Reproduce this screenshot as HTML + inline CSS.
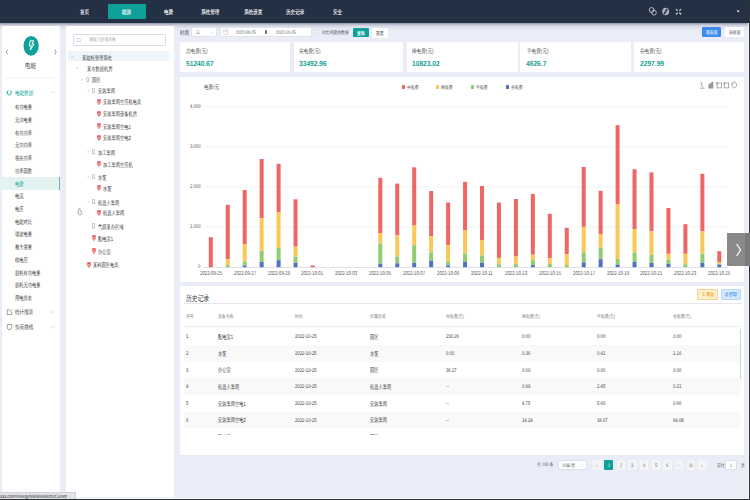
<!DOCTYPE html>
<html><head><meta charset="utf-8">
<style>
*{margin:0;padding:0;box-sizing:border-box}
html,body{width:750px;height:500px;overflow:hidden;background:#eaedf8;font-family:"Liberation Sans",sans-serif;color:#333}
.a{position:absolute}
.t{position:absolute;white-space:nowrap;line-height:1;transform:scaleX(0.77);transform-origin:0 0;text-rendering:geometricPrecision}
</style></head><body>
<div class="a" style="left:0.00px;top:0.00px;width:750.00px;height:22.60px;background:#243044;"></div>
<div class="a" style="left:0.00px;top:22.60px;width:750.00px;height:8.00px;background:linear-gradient(#8f95a6 0%,#c9ccd9 25%,#e3e6f2 60%,#eaedf8 100%);"></div>
<div class="a" style="left:108.00px;top:4.00px;width:37.50px;height:15.20px;background:#10a09a;border-radius:1px"></div>
<div class="t" style="left:79.55px;top:9.95px;font-size:6px;color:#fff;font-weight:normal;text-shadow:0 0 0.5px rgba(255,255,255,.7);">首页</div>
<div class="t" style="left:121.65px;top:9.95px;font-size:6px;color:#fff;font-weight:normal;text-shadow:0 0 0.5px rgba(255,255,255,.7);">能源</div>
<div class="t" style="left:163.75px;top:9.95px;font-size:6px;color:#fff;font-weight:normal;text-shadow:0 0 0.5px rgba(255,255,255,.7);">电费</div>
<div class="t" style="left:201.40px;top:9.95px;font-size:6px;color:#fff;font-weight:normal;text-shadow:0 0 0.5px rgba(255,255,255,.7);">系统管理</div>
<div class="t" style="left:243.90px;top:9.95px;font-size:6px;color:#fff;font-weight:normal;text-shadow:0 0 0.5px rgba(255,255,255,.7);">系统设置</div>
<div class="t" style="left:285.60px;top:9.95px;font-size:6px;color:#fff;font-weight:normal;text-shadow:0 0 0.5px rgba(255,255,255,.7);">历史记录</div>
<div class="t" style="left:333.35px;top:9.95px;font-size:6px;color:#fff;font-weight:normal;text-shadow:0 0 0.5px rgba(255,255,255,.7);">安全</div>
<svg class="a" style="left:648px;top:5px" width="100" height="13" viewBox="0 0 100 13">
 <g fill="none" stroke="#b3b8c1" stroke-width="1.0">
  <ellipse cx="3.6" cy="5.0" rx="2.3" ry="2.5"/><ellipse cx="6.0" cy="7.6" rx="2.3" ry="2.5"/>
 </g>
 <ellipse cx="17.7" cy="6.5" rx="3.5" ry="3.8" fill="#aab0ba"/>
 <line x1="16.1" y1="9.2" x2="19.3" y2="3.8" stroke="#243044" stroke-width="1.5"/>
 <g stroke="#cfd3da" stroke-width="1.3" stroke-linecap="round">
  <path d="M28.3 4.4 l1 1 M32.7 4.4 l-1 1 M28.3 9 l1 -1 M32.7 9 l-1 -1"/>
 </g>
 <path d="M88.6 5.6 h3 l-1.5 1.9 z" fill="#fff"/>
</svg>
<div class="a" style="left:2.00px;top:26.40px;width:58.30px;height:470.20px;background:#fff;"></div>
<svg class="a" style="left:0;top:27px" width="62" height="60" viewBox="0 0 62 60">
 <ellipse cx="31.1" cy="18.8" rx="7.6" ry="9.9" fill="#10a09a"/>
 <path d="M30.2 13.8 h3.4 l-1.6 3.2 h2 l-3.6 5.6 l0.8 -3.8 h-1.9 z" fill="none" stroke="#e8fbf8" stroke-width="1.05" stroke-linejoin="round"/>
 <path d="M7.6 22.6 l-1.3 2.4 l1.3 2.4" fill="none" stroke="#8f9298" stroke-width="0.9"/>
 <path d="M54.9 22.6 l1.3 2.4 l-1.3 2.4" fill="none" stroke="#8f9298" stroke-width="0.9"/>
 <line x1="4" y1="50.9" x2="59" y2="50.9" stroke="#eceef2" stroke-width="0.8"/>
</svg>
<div class="t" style="left:25.00px;top:63.01px;font-size:7px;color:#3a3a3a;font-weight:normal;">电能</div>
<svg class="a" style="left:6px;top:88px" width="8" height="9" viewBox="0 0 8 9"><path d="M4.2 2.6 A2.1 2.3 0 1 1 2.4 2.5" fill="none" stroke="#10a09a" stroke-width="0.95"/></svg>
<div class="t" style="left:14.70px;top:90.82px;font-size:6px;color:#10a09a;font-weight:normal;">电能数据</div>
<svg class="a" style="left:50px;top:90px" width="6" height="5" viewBox="0 0 6 5"><path d="M1 3.2 l1.8 -1.6 l1.8 1.6" fill="none" stroke="#c0c4cc" stroke-width="0.6"/></svg>
<div class="t" style="left:14.70px;top:105.28px;font-size:6px;color:#383838;font-weight:normal;transform:scaleX(0.71);">有功电量</div>
<div class="t" style="left:14.70px;top:118.00px;font-size:6px;color:#383838;font-weight:normal;transform:scaleX(0.71);">无功电量</div>
<div class="t" style="left:14.70px;top:130.72px;font-size:6px;color:#383838;font-weight:normal;transform:scaleX(0.71);">有功功率</div>
<div class="t" style="left:14.70px;top:143.44px;font-size:6px;color:#383838;font-weight:normal;transform:scaleX(0.71);">无功功率</div>
<div class="t" style="left:14.70px;top:156.16px;font-size:6px;color:#383838;font-weight:normal;transform:scaleX(0.71);">视在功率</div>
<div class="t" style="left:14.70px;top:168.88px;font-size:6px;color:#383838;font-weight:normal;transform:scaleX(0.71);">功率因数</div>
<div class="a" style="left:0.00px;top:176.72px;width:60.30px;height:12.80px;background:#e2f3f2;"></div>
<div class="a" style="left:59.30px;top:176.72px;width:1.10px;height:12.80px;background:#6fb0aa;"></div>
<div class="t" style="left:14.70px;top:181.60px;font-size:6px;color:#10a09a;font-weight:normal;transform:scaleX(0.71);">电费</div>
<div class="t" style="left:14.70px;top:194.32px;font-size:6px;color:#383838;font-weight:normal;transform:scaleX(0.71);">电流</div>
<div class="t" style="left:14.70px;top:207.04px;font-size:6px;color:#383838;font-weight:normal;transform:scaleX(0.71);">电压</div>
<div class="t" style="left:14.70px;top:219.76px;font-size:6px;color:#383838;font-weight:normal;transform:scaleX(0.71);">电能对比</div>
<div class="t" style="left:14.70px;top:232.48px;font-size:6px;color:#383838;font-weight:normal;transform:scaleX(0.71);">谐波电量</div>
<div class="t" style="left:14.70px;top:245.20px;font-size:6px;color:#383838;font-weight:normal;transform:scaleX(0.71);">最大需量</div>
<div class="t" style="left:14.70px;top:257.92px;font-size:6px;color:#383838;font-weight:normal;transform:scaleX(0.71);">线电压</div>
<div class="t" style="left:14.70px;top:270.64px;font-size:6px;color:#383838;font-weight:normal;transform:scaleX(0.71);">损耗有功电量</div>
<div class="t" style="left:14.70px;top:283.36px;font-size:6px;color:#383838;font-weight:normal;transform:scaleX(0.71);">损耗无功电量</div>
<div class="t" style="left:14.70px;top:296.08px;font-size:6px;color:#383838;font-weight:normal;transform:scaleX(0.71);">用电排名</div>
<svg class="a" style="left:6px;top:308px" width="8" height="24" viewBox="0 0 8 24">
 <path d="M1.2 1.8 h2.6 M1.2 1.8 v4.8 h4.6 v-2.6" fill="none" stroke="#777" stroke-width="0.7"/>
 <path d="M3.4 4.2 l2.8 -2.8" stroke="#777" stroke-width="0.7"/>
 <path d="M1.3 16.6 h4.4 v2.8 a2.2 2.2 0 0 1 -4.4 0 z" fill="none" stroke="#777" stroke-width="0.7"/>
</svg>
<div class="t" style="left:14.90px;top:310.15px;font-size:6px;color:#444;font-weight:normal;">统计报表</div>
<div class="t" style="left:14.90px;top:325.05px;font-size:6px;color:#444;font-weight:normal;">负荷曲线</div>
<svg class="a" style="left:50px;top:309px" width="6" height="20" viewBox="0 0 6 20"><path d="M1 2.2 l1.8 1.4 l1.8 -1.4 M1 17 l1.8 1.4 l1.8 -1.4" fill="none" stroke="#c0c4cc" stroke-width="0.6"/></svg>
<div class="a" style="left:65.80px;top:26.40px;width:108.60px;height:470.20px;background:#fff;"></div>
<div class="a" style="left:73.40px;top:34.30px;width:92.30px;height:11.40px;background:#fff;border:0.6px solid #dcdee3;border-radius:1.2px"></div>
<svg class="a" style="left:76px;top:36.5px" width="6" height="7" viewBox="0 0 6 7"><circle cx="2.8" cy="3" r="1.7" fill="none" stroke="#b8bcc4" stroke-width="0.6"/><line x1="4" y1="4.3" x2="5" y2="5.3" stroke="#b8bcc4" stroke-width="0.6"/></svg>
<div class="t" style="left:88.80px;top:38.25px;font-size:5px;color:#9a9da3;font-weight:normal;">请输入区域名称</div>
<div class="a" style="left:68.00px;top:51.00px;width:101.00px;height:10.00px;background:#ecf4fc;"></div>
<svg class="a" style="left:71.30px;top:55.75px" width="2.4" height="2" viewBox="0 0 24 20"><path d="M2 3 h20 l-10 14 z" fill="#c0c4cc"/></svg>
<div class="t" style="left:82.00px;top:55.63px;font-size:6px;color:#383838;font-weight:normal;transform:scaleX(0.71);">某能耗管理系统</div>
<svg class="a" style="left:76.30px;top:67.30px" width="2.4" height="2" viewBox="0 0 24 20"><path d="M2 3 h20 l-10 14 z" fill="#c0c4cc"/></svg>
<div class="t" style="left:87.00px;top:67.18px;font-size:6px;color:#383838;font-weight:normal;transform:scaleX(0.71);">某市数据机房</div>
<svg class="a" style="left:81.30px;top:78.50px" width="2.4" height="2" viewBox="0 0 24 20"><path d="M2 3 h20 l-10 14 z" fill="#c0c4cc"/></svg>
<svg class="a" style="left:86.40px;top:76.80px" width="3" height="5.4" viewBox="0 0 30 54"><rect x="4" y="3" width="22" height="48" rx="5" fill="none" stroke="#8d9096" stroke-width="5"/><rect x="11" y="40" width="8" height="5" fill="#8d9096"/></svg>
<div class="t" style="left:92.00px;top:78.38px;font-size:6px;color:#383838;font-weight:normal;transform:scaleX(0.71);">园区</div>
<svg class="a" style="left:86.80px;top:89.50px" width="2.4" height="2" viewBox="0 0 24 20"><path d="M2 3 h20 l-10 14 z" fill="#c0c4cc"/></svg>
<svg class="a" style="left:91.60px;top:87.80px" width="3" height="5.4" viewBox="0 0 30 54"><rect x="4" y="3" width="22" height="48" rx="5" fill="none" stroke="#8d9096" stroke-width="5"/><rect x="11" y="40" width="8" height="5" fill="#8d9096"/></svg>
<div class="t" style="left:97.50px;top:89.38px;font-size:6px;color:#383838;font-weight:normal;transform:scaleX(0.71);">安装车间</div>
<svg class="a" style="left:96.60px;top:98.50px" width="4" height="6" viewBox="0 0 40 60"><rect x="3" y="3" width="34" height="36" rx="4" fill="#f7a0a0" stroke="#e55050" stroke-width="6"/><rect x="10" y="10" width="20" height="10" fill="#e55050"/><path d="M12 39 h16 v18 h-16 z" fill="#f08080"/></svg>
<div class="t" style="left:102.90px;top:100.38px;font-size:6px;color:#383838;font-weight:normal;transform:scaleX(0.71);">安装车间空压机电表</div>
<svg class="a" style="left:96.60px;top:110.60px" width="4" height="6" viewBox="0 0 40 60"><rect x="3" y="3" width="34" height="36" rx="4" fill="#f7a0a0" stroke="#e55050" stroke-width="6"/><rect x="10" y="10" width="20" height="10" fill="#e55050"/><path d="M12 39 h16 v18 h-16 z" fill="#f08080"/></svg>
<div class="t" style="left:102.90px;top:112.48px;font-size:6px;color:#383838;font-weight:normal;transform:scaleX(0.71);">安装车间设备机房</div>
<svg class="a" style="left:96.60px;top:122.90px" width="4" height="6" viewBox="0 0 40 60"><rect x="3" y="3" width="34" height="36" rx="4" fill="#f7a0a0" stroke="#e55050" stroke-width="6"/><rect x="10" y="10" width="20" height="10" fill="#e55050"/><path d="M12 39 h16 v18 h-16 z" fill="#f08080"/></svg>
<div class="t" style="left:102.90px;top:124.78px;font-size:6px;color:#383838;font-weight:normal;transform:scaleX(0.71);">安装车间空电1</div>
<svg class="a" style="left:96.60px;top:134.60px" width="4" height="6" viewBox="0 0 40 60"><rect x="3" y="3" width="34" height="36" rx="4" fill="#f7a0a0" stroke="#e55050" stroke-width="6"/><rect x="10" y="10" width="20" height="10" fill="#e55050"/><path d="M12 39 h16 v18 h-16 z" fill="#f08080"/></svg>
<div class="t" style="left:102.90px;top:136.48px;font-size:6px;color:#383838;font-weight:normal;transform:scaleX(0.71);">安装车间空电2</div>
<svg class="a" style="left:86.80px;top:151.00px" width="2.4" height="2" viewBox="0 0 24 20"><path d="M2 3 h20 l-10 14 z" fill="#c0c4cc"/></svg>
<svg class="a" style="left:91.60px;top:149.30px" width="3" height="5.4" viewBox="0 0 30 54"><rect x="4" y="3" width="22" height="48" rx="5" fill="none" stroke="#8d9096" stroke-width="5"/><rect x="11" y="40" width="8" height="5" fill="#8d9096"/></svg>
<div class="t" style="left:97.50px;top:150.88px;font-size:6px;color:#383838;font-weight:normal;transform:scaleX(0.71);">加工车间</div>
<svg class="a" style="left:96.60px;top:160.70px" width="4" height="6" viewBox="0 0 40 60"><rect x="3" y="3" width="34" height="36" rx="4" fill="#f7a0a0" stroke="#e55050" stroke-width="6"/><rect x="10" y="10" width="20" height="10" fill="#e55050"/><path d="M12 39 h16 v18 h-16 z" fill="#f08080"/></svg>
<div class="t" style="left:102.90px;top:162.58px;font-size:6px;color:#383838;font-weight:normal;transform:scaleX(0.71);">加工车间空压机</div>
<svg class="a" style="left:86.80px;top:175.80px" width="2.4" height="2" viewBox="0 0 24 20"><path d="M2 3 h20 l-10 14 z" fill="#c0c4cc"/></svg>
<svg class="a" style="left:91.60px;top:174.10px" width="3" height="5.4" viewBox="0 0 30 54"><rect x="4" y="3" width="22" height="48" rx="5" fill="none" stroke="#8d9096" stroke-width="5"/><rect x="11" y="40" width="8" height="5" fill="#8d9096"/></svg>
<div class="t" style="left:97.50px;top:175.68px;font-size:6px;color:#383838;font-weight:normal;transform:scaleX(0.71);">水泵</div>
<svg class="a" style="left:96.60px;top:185.00px" width="4" height="6" viewBox="0 0 40 60"><rect x="3" y="3" width="34" height="36" rx="4" fill="#f7a0a0" stroke="#e55050" stroke-width="6"/><rect x="10" y="10" width="20" height="10" fill="#e55050"/><path d="M12 39 h16 v18 h-16 z" fill="#f08080"/></svg>
<div class="t" style="left:102.90px;top:186.88px;font-size:6px;color:#383838;font-weight:normal;transform:scaleX(0.71);">水泵</div>
<svg class="a" style="left:86.80px;top:200.70px" width="2.4" height="2" viewBox="0 0 24 20"><path d="M2 3 h20 l-10 14 z" fill="#c0c4cc"/></svg>
<svg class="a" style="left:91.60px;top:199.00px" width="3" height="5.4" viewBox="0 0 30 54"><rect x="4" y="3" width="22" height="48" rx="5" fill="none" stroke="#8d9096" stroke-width="5"/><rect x="11" y="40" width="8" height="5" fill="#8d9096"/></svg>
<div class="t" style="left:97.50px;top:200.58px;font-size:6px;color:#383838;font-weight:normal;transform:scaleX(0.71);">机器人车间</div>
<svg class="a" style="left:96.60px;top:209.60px" width="4" height="6" viewBox="0 0 40 60"><rect x="3" y="3" width="34" height="36" rx="4" fill="#f7a0a0" stroke="#e55050" stroke-width="6"/><rect x="10" y="10" width="20" height="10" fill="#e55050"/><path d="M12 39 h16 v18 h-16 z" fill="#f08080"/></svg>
<div class="t" style="left:102.90px;top:211.48px;font-size:6px;color:#383838;font-weight:normal;transform:scaleX(0.71);">机器人车间</div>
<svg class="a" style="left:91.60px;top:223.20px" width="3" height="5.4" viewBox="0 0 30 54"><rect x="4" y="3" width="22" height="48" rx="5" fill="none" stroke="#8d9096" stroke-width="5"/><rect x="11" y="40" width="8" height="5" fill="#8d9096"/></svg>
<div class="t" style="left:97.50px;top:224.78px;font-size:6px;color:#383838;font-weight:normal;transform:scaleX(0.71);">气膜某办区域</div>
<svg class="a" style="left:91.60px;top:235.20px" width="4" height="6" viewBox="0 0 40 60"><rect x="3" y="3" width="34" height="36" rx="4" fill="#f7a0a0" stroke="#e55050" stroke-width="6"/><rect x="10" y="10" width="20" height="10" fill="#e55050"/><path d="M12 39 h16 v18 h-16 z" fill="#f08080"/></svg>
<div class="t" style="left:97.80px;top:237.08px;font-size:6px;color:#383838;font-weight:normal;transform:scaleX(0.71);">配电室1</div>
<svg class="a" style="left:91.60px;top:248.00px" width="4" height="6" viewBox="0 0 40 60"><rect x="3" y="3" width="34" height="36" rx="4" fill="#f7a0a0" stroke="#e55050" stroke-width="6"/><rect x="10" y="10" width="20" height="10" fill="#e55050"/><path d="M12 39 h16 v18 h-16 z" fill="#f08080"/></svg>
<div class="t" style="left:97.80px;top:249.88px;font-size:6px;color:#383838;font-weight:normal;transform:scaleX(0.71);">办公室</div>
<svg class="a" style="left:86.60px;top:261.60px" width="4" height="6" viewBox="0 0 40 60"><rect x="3" y="3" width="34" height="36" rx="4" fill="#f7a0a0" stroke="#e55050" stroke-width="6"/><rect x="10" y="10" width="20" height="10" fill="#e55050"/><path d="M12 39 h16 v18 h-16 z" fill="#f08080"/></svg>
<div class="t" style="left:92.80px;top:263.48px;font-size:6px;color:#383838;font-weight:normal;transform:scaleX(0.71);">某科园区电表</div>
<svg class="a" style="left:76.5px;top:207.8px" width="5" height="8" viewBox="0 0 10 16"><path d="M3 1.5 v7 l-1.3 -1 l-0.9 1 l3.2 5 h4.5 l0.8 -3 v-3.2 l-1 -0.4 v-0.4 l-1 -0.4 v-0.3 l-1 -0.4 v-3.9 z" fill="#f4f4f4" stroke="#666" stroke-width="0.9"/></svg>
<div class="t" style="left:180.00px;top:31.01px;font-size:6px;color:#444;font-weight:normal;">时间</div>
<div class="a" style="left:191.20px;top:27.20px;width:26.00px;height:10.00px;background:#fff;border:0.5px solid #e0e3ea;border-radius:1px"></div>
<div class="t" style="left:195.60px;top:30.92px;font-size:5px;color:#888;font-weight:normal;">日</div>
<svg class="a" style="left:210px;top:30.5px" width="5" height="4" viewBox="0 0 5 4"><path d="M1 1.3 l1.5 1.4 l1.5 -1.4" fill="none" stroke="#c0c4cc" stroke-width="0.5"/></svg>
<div class="a" style="left:220.40px;top:27.20px;width:91.20px;height:10.00px;background:#fff;border:0.5px solid #e0e3ea;border-radius:1px"></div>
<svg class="a" style="left:223px;top:29.2px" width="6" height="6" viewBox="0 0 6 6"><rect x="0.8" y="0.8" width="4" height="4.4" fill="none" stroke="#c0c4cc" stroke-width="0.6"/><line x1="0.8" y1="2.2" x2="4.8" y2="2.2" stroke="#c0c4cc" stroke-width="0.6"/></svg>
<div class="t" style="left:236.30px;top:30.95px;font-size:5.0px;color:#555;font-weight:normal;">2022-09-25</div>
<div class="a" style="left:264.60px;top:29.80px;width:1.80px;height:4.60px;background:transparent;border:0.5px solid #777;border-radius:0.4px"></div>
<div class="t" style="left:276.00px;top:30.95px;font-size:5.0px;color:#555;font-weight:normal;">2022-10-25</div>
<div class="a" style="left:314.30px;top:30.30px;width:3.80px;height:3.80px;background:#fff;border:0.5px solid #dcdfe6;border-radius:0.5px"></div>
<div class="t" style="left:321.50px;top:31.02px;font-size:5px;color:#555;font-weight:normal;">对比同期的数据</div>
<div class="a" style="left:353.00px;top:28.20px;width:15.80px;height:9.20px;background:#10a09a;border-radius:1px"></div>
<div class="t" style="left:357.05px;top:31.55px;font-size:5px;color:#fff;font-weight:bold;">查询</div>
<div class="a" style="left:372.00px;top:28.00px;width:15.70px;height:9.70px;background:#fff;border-radius:1px"></div>
<div class="t" style="left:376.15px;top:31.55px;font-size:5px;color:#555;font-weight:normal;">重置</div>
<div class="a" style="left:702.30px;top:27.30px;width:19.10px;height:9.60px;background:#3c8cf0;border-radius:1px"></div>
<div class="t" style="left:706.12px;top:30.85px;font-size:5px;color:#fff;font-weight:normal;">图表版</div>
<div class="a" style="left:725.00px;top:27.30px;width:19.10px;height:9.60px;background:#fff;border-radius:1px"></div>
<div class="t" style="left:728.83px;top:30.85px;font-size:5px;color:#555;font-weight:normal;">表格版</div>
<div class="a" style="left:179.70px;top:42.00px;width:110.50px;height:30.00px;background:#fff;"></div>
<div class="t" style="left:186.00px;top:49.05px;font-size:6px;color:#5a5a5a;font-weight:normal;">总电费(元)</div>
<div class="t" style="left:185.60px;top:59.65px;font-size:7.4px;color:#1a9f97;font-weight:bold;transform:scaleX(0.9);">51240.67</div>
<div class="a" style="left:293.70px;top:42.00px;width:109.80px;height:30.00px;background:#fff;"></div>
<div class="t" style="left:299.00px;top:49.05px;font-size:6px;color:#5a5a5a;font-weight:normal;">尖电费(元)</div>
<div class="t" style="left:298.60px;top:59.65px;font-size:7.4px;color:#1a9f97;font-weight:bold;transform:scaleX(0.9);">33492.96</div>
<div class="a" style="left:407.00px;top:42.00px;width:110.70px;height:30.00px;background:#fff;"></div>
<div class="t" style="left:412.30px;top:49.05px;font-size:6px;color:#5a5a5a;font-weight:normal;">峰电费(元)</div>
<div class="t" style="left:411.90px;top:59.65px;font-size:7.4px;color:#1a9f97;font-weight:bold;transform:scaleX(0.9);">10823.02</div>
<div class="a" style="left:520.30px;top:42.00px;width:111.00px;height:30.00px;background:#fff;"></div>
<div class="t" style="left:526.50px;top:49.05px;font-size:6px;color:#5a5a5a;font-weight:normal;">平电费(元)</div>
<div class="t" style="left:526.10px;top:59.65px;font-size:7.4px;color:#1a9f97;font-weight:bold;transform:scaleX(0.9);">4626.7</div>
<div class="a" style="left:634.00px;top:42.00px;width:110.30px;height:30.00px;background:#fff;"></div>
<div class="t" style="left:640.00px;top:49.05px;font-size:6px;color:#5a5a5a;font-weight:normal;">谷电费(元)</div>
<div class="t" style="left:639.60px;top:59.65px;font-size:7.4px;color:#1a9f97;font-weight:bold;transform:scaleX(0.9);">2297.99</div>
<div class="a" style="left:179.70px;top:76.60px;width:564.60px;height:205.80px;background:#fff;"></div>
<svg class="a" style="left:0;top:0" width="750" height="500" viewBox="0 0 750 500">
<g stroke="#e8eaf0" stroke-width="0.6">
<line x1="203.5" y1="106.7" x2="728" y2="106.7"/>
<line x1="203.5" y1="146.8" x2="728" y2="146.8"/>
<line x1="203.5" y1="186.9" x2="728" y2="186.9"/>
<line x1="203.5" y1="227.0" x2="728" y2="227.0"/>
</g>
<line x1="203.5" y1="267.4" x2="728" y2="267.4" stroke="#cfd2d8" stroke-width="0.7"/>
<rect x="208.80" y="237.20" width="4.0" height="30.00" fill="#ee6666"/>
<rect x="225.75" y="204.80" width="4.0" height="54.40" fill="#ee6666"/>
<rect x="225.75" y="259.20" width="4.0" height="5.90" fill="#fac858"/>
<rect x="225.75" y="265.10" width="4.0" height="2.10" fill="#91cc75"/>
<rect x="242.70" y="190.00" width="4.0" height="54.40" fill="#ee6666"/>
<rect x="242.70" y="244.40" width="4.0" height="17.10" fill="#fac858"/>
<rect x="242.70" y="261.50" width="4.0" height="4.10" fill="#91cc75"/>
<rect x="242.70" y="265.60" width="4.0" height="1.60" fill="#5470c6"/>
<rect x="259.65" y="159.00" width="4.0" height="59.30" fill="#ee6666"/>
<rect x="259.65" y="218.30" width="4.0" height="32.40" fill="#fac858"/>
<rect x="259.65" y="250.70" width="4.0" height="11.30" fill="#91cc75"/>
<rect x="259.65" y="262.00" width="4.0" height="5.20" fill="#5470c6"/>
<rect x="276.60" y="163.80" width="4.0" height="48.60" fill="#ee6666"/>
<rect x="276.60" y="212.40" width="4.0" height="35.60" fill="#fac858"/>
<rect x="276.60" y="248.00" width="4.0" height="12.20" fill="#91cc75"/>
<rect x="276.60" y="260.20" width="4.0" height="7.00" fill="#5470c6"/>
<rect x="293.55" y="199.30" width="4.0" height="47.40" fill="#ee6666"/>
<rect x="293.55" y="246.70" width="4.0" height="9.90" fill="#fac858"/>
<rect x="293.55" y="256.60" width="4.0" height="6.20" fill="#91cc75"/>
<rect x="293.55" y="262.80" width="4.0" height="4.40" fill="#5470c6"/>
<rect x="310.50" y="265.50" width="4.0" height="1.70" fill="#ee6666"/>
<rect x="378.30" y="177.80" width="4.0" height="55.40" fill="#ee6666"/>
<rect x="378.30" y="233.20" width="4.0" height="10.30" fill="#fac858"/>
<rect x="378.30" y="243.50" width="4.0" height="20.20" fill="#91cc75"/>
<rect x="378.30" y="263.70" width="4.0" height="3.50" fill="#5470c6"/>
<rect x="395.25" y="183.60" width="4.0" height="51.80" fill="#ee6666"/>
<rect x="395.25" y="235.40" width="4.0" height="21.10" fill="#fac858"/>
<rect x="395.25" y="256.50" width="4.0" height="6.80" fill="#91cc75"/>
<rect x="395.25" y="263.30" width="4.0" height="3.90" fill="#5470c6"/>
<rect x="412.20" y="167.40" width="4.0" height="58.10" fill="#ee6666"/>
<rect x="412.20" y="225.50" width="4.0" height="19.80" fill="#fac858"/>
<rect x="412.20" y="245.30" width="4.0" height="17.70" fill="#91cc75"/>
<rect x="412.20" y="263.00" width="4.0" height="4.20" fill="#5470c6"/>
<rect x="429.15" y="191.00" width="4.0" height="45.00" fill="#ee6666"/>
<rect x="429.15" y="236.00" width="4.0" height="16.50" fill="#fac858"/>
<rect x="429.15" y="252.50" width="4.0" height="8.50" fill="#91cc75"/>
<rect x="429.15" y="261.00" width="4.0" height="6.20" fill="#5470c6"/>
<rect x="446.10" y="202.50" width="4.0" height="42.80" fill="#ee6666"/>
<rect x="446.10" y="245.30" width="4.0" height="16.20" fill="#fac858"/>
<rect x="446.10" y="261.50" width="4.0" height="4.00" fill="#91cc75"/>
<rect x="446.10" y="265.50" width="4.0" height="1.70" fill="#5470c6"/>
<rect x="463.05" y="181.80" width="4.0" height="48.20" fill="#ee6666"/>
<rect x="463.05" y="230.00" width="4.0" height="23.40" fill="#fac858"/>
<rect x="463.05" y="253.40" width="4.0" height="8.60" fill="#91cc75"/>
<rect x="463.05" y="262.00" width="4.0" height="5.20" fill="#5470c6"/>
<rect x="480.00" y="185.90" width="4.0" height="54.50" fill="#ee6666"/>
<rect x="480.00" y="240.40" width="4.0" height="15.20" fill="#fac858"/>
<rect x="480.00" y="255.60" width="4.0" height="7.20" fill="#91cc75"/>
<rect x="480.00" y="262.80" width="4.0" height="4.40" fill="#5470c6"/>
<rect x="496.95" y="202.50" width="4.0" height="55.40" fill="#ee6666"/>
<rect x="496.95" y="257.90" width="4.0" height="6.30" fill="#fac858"/>
<rect x="496.95" y="264.20" width="4.0" height="3.00" fill="#91cc75"/>
<rect x="513.90" y="199.00" width="4.0" height="57.60" fill="#ee6666"/>
<rect x="513.90" y="256.60" width="4.0" height="7.60" fill="#fac858"/>
<rect x="513.90" y="264.20" width="4.0" height="3.00" fill="#91cc75"/>
<rect x="530.85" y="194.00" width="4.0" height="60.70" fill="#ee6666"/>
<rect x="530.85" y="254.70" width="4.0" height="5.50" fill="#fac858"/>
<rect x="530.85" y="260.20" width="4.0" height="4.90" fill="#91cc75"/>
<rect x="530.85" y="265.10" width="4.0" height="2.10" fill="#5470c6"/>
<rect x="547.80" y="213.80" width="4.0" height="44.60" fill="#ee6666"/>
<rect x="547.80" y="258.40" width="4.0" height="5.40" fill="#fac858"/>
<rect x="547.80" y="263.80" width="4.0" height="3.40" fill="#91cc75"/>
<rect x="564.75" y="227.80" width="4.0" height="26.50" fill="#ee6666"/>
<rect x="564.75" y="254.30" width="4.0" height="10.80" fill="#fac858"/>
<rect x="564.75" y="265.10" width="4.0" height="2.10" fill="#91cc75"/>
<rect x="581.70" y="167.00" width="4.0" height="59.80" fill="#ee6666"/>
<rect x="581.70" y="226.80" width="4.0" height="25.70" fill="#fac858"/>
<rect x="581.70" y="252.50" width="4.0" height="9.90" fill="#91cc75"/>
<rect x="581.70" y="262.40" width="4.0" height="4.80" fill="#5470c6"/>
<rect x="598.65" y="190.80" width="4.0" height="43.70" fill="#ee6666"/>
<rect x="598.65" y="234.50" width="4.0" height="13.10" fill="#fac858"/>
<rect x="598.65" y="247.60" width="4.0" height="11.60" fill="#91cc75"/>
<rect x="598.65" y="259.20" width="4.0" height="8.00" fill="#5470c6"/>
<rect x="615.60" y="125.20" width="4.0" height="79.20" fill="#ee6666"/>
<rect x="615.60" y="204.40" width="4.0" height="54.40" fill="#fac858"/>
<rect x="615.60" y="258.80" width="4.0" height="5.90" fill="#91cc75"/>
<rect x="615.60" y="264.70" width="4.0" height="2.50" fill="#5470c6"/>
<rect x="632.55" y="169.20" width="4.0" height="59.90" fill="#ee6666"/>
<rect x="632.55" y="229.10" width="4.0" height="23.40" fill="#fac858"/>
<rect x="632.55" y="252.50" width="4.0" height="9.50" fill="#91cc75"/>
<rect x="632.55" y="262.00" width="4.0" height="5.20" fill="#5470c6"/>
<rect x="649.50" y="172.40" width="4.0" height="59.00" fill="#ee6666"/>
<rect x="649.50" y="231.40" width="4.0" height="23.40" fill="#fac858"/>
<rect x="649.50" y="254.80" width="4.0" height="8.00" fill="#91cc75"/>
<rect x="649.50" y="262.80" width="4.0" height="4.40" fill="#5470c6"/>
<rect x="666.45" y="208.00" width="4.0" height="45.80" fill="#ee6666"/>
<rect x="666.45" y="253.80" width="4.0" height="5.90" fill="#fac858"/>
<rect x="666.45" y="259.70" width="4.0" height="4.00" fill="#91cc75"/>
<rect x="666.45" y="263.70" width="4.0" height="3.50" fill="#5470c6"/>
<rect x="683.40" y="224.20" width="4.0" height="29.60" fill="#ee6666"/>
<rect x="683.40" y="253.80" width="4.0" height="10.40" fill="#fac858"/>
<rect x="683.40" y="264.20" width="4.0" height="3.00" fill="#91cc75"/>
<rect x="700.35" y="173.80" width="4.0" height="57.60" fill="#ee6666"/>
<rect x="700.35" y="231.40" width="4.0" height="22.40" fill="#fac858"/>
<rect x="700.35" y="253.80" width="4.0" height="9.00" fill="#91cc75"/>
<rect x="700.35" y="262.80" width="4.0" height="4.40" fill="#5470c6"/>
<rect x="717.30" y="251.20" width="4.0" height="10.80" fill="#ee6666"/>
<rect x="717.30" y="262.00" width="4.0" height="1.70" fill="#fac858"/>
<rect x="717.30" y="263.70" width="4.0" height="0.90" fill="#91cc75"/>
<rect x="717.30" y="264.60" width="4.0" height="2.60" fill="#5470c6"/>
</svg>
<div class="t" style="left:190.00px;top:104.80px;font-size:5.5px;color:#555;font-weight:normal;">4,000</div>
<div class="t" style="left:190.00px;top:144.90px;font-size:5.5px;color:#555;font-weight:normal;">3,000</div>
<div class="t" style="left:190.00px;top:185.00px;font-size:5.5px;color:#555;font-weight:normal;">2,000</div>
<div class="t" style="left:190.00px;top:225.10px;font-size:5.5px;color:#555;font-weight:normal;">1,000</div>
<div class="t" style="left:198.25px;top:265.30px;font-size:5.5px;color:#555;font-weight:normal;">0</div>
<div class="t" style="left:199.77px;top:271.95px;font-size:5.6px;color:#555;font-weight:normal;">2022-09-25</div>
<div class="t" style="left:233.67px;top:271.95px;font-size:5.6px;color:#555;font-weight:normal;">2022-09-27</div>
<div class="t" style="left:267.57px;top:271.95px;font-size:5.6px;color:#555;font-weight:normal;">2022-09-29</div>
<div class="t" style="left:301.47px;top:271.95px;font-size:5.6px;color:#555;font-weight:normal;">2022-10-01</div>
<div class="t" style="left:335.37px;top:271.95px;font-size:5.6px;color:#555;font-weight:normal;">2022-10-03</div>
<div class="t" style="left:369.27px;top:271.95px;font-size:5.6px;color:#555;font-weight:normal;">2022-10-05</div>
<div class="t" style="left:403.17px;top:271.95px;font-size:5.6px;color:#555;font-weight:normal;">2022-10-07</div>
<div class="t" style="left:437.07px;top:271.95px;font-size:5.6px;color:#555;font-weight:normal;">2022-10-09</div>
<div class="t" style="left:470.97px;top:271.95px;font-size:5.6px;color:#555;font-weight:normal;">2022-10-11</div>
<div class="t" style="left:504.87px;top:271.95px;font-size:5.6px;color:#555;font-weight:normal;">2022-10-13</div>
<div class="t" style="left:538.77px;top:271.95px;font-size:5.6px;color:#555;font-weight:normal;">2022-10-15</div>
<div class="t" style="left:572.67px;top:271.95px;font-size:5.6px;color:#555;font-weight:normal;">2022-10-17</div>
<div class="t" style="left:606.57px;top:271.95px;font-size:5.6px;color:#555;font-weight:normal;">2022-10-19</div>
<div class="t" style="left:640.47px;top:271.95px;font-size:5.6px;color:#555;font-weight:normal;">2022-10-21</div>
<div class="t" style="left:674.37px;top:271.95px;font-size:5.6px;color:#555;font-weight:normal;">2022-10-23</div>
<div class="t" style="left:708.27px;top:271.95px;font-size:5.6px;color:#555;font-weight:normal;">2022-10-25</div>
<div class="t" style="left:203.50px;top:85.28px;font-size:6px;color:#555;font-weight:normal;">电费/元</div>
<div class="a" style="left:401.60px;top:84.70px;width:3.00px;height:4.00px;background:#ee6666;border-radius:0.5px"></div>
<div class="t" style="left:406.70px;top:85.98px;font-size:5px;color:#555;font-weight:normal;">尖电费</div>
<div class="a" style="left:436.20px;top:84.70px;width:3.00px;height:4.00px;background:#fac858;border-radius:0.5px"></div>
<div class="t" style="left:441.30px;top:85.98px;font-size:5px;color:#555;font-weight:normal;">峰电费</div>
<div class="a" style="left:470.70px;top:84.70px;width:3.00px;height:4.00px;background:#91cc75;border-radius:0.5px"></div>
<div class="t" style="left:475.80px;top:85.98px;font-size:5px;color:#555;font-weight:normal;">平电费</div>
<div class="a" style="left:505.50px;top:84.70px;width:3.00px;height:4.00px;background:#5470c6;border-radius:0.5px"></div>
<div class="t" style="left:510.60px;top:85.98px;font-size:5px;color:#555;font-weight:normal;">谷电费</div>
<svg class="a" style="left:0;top:0" width="750" height="100" viewBox="0 0 750 100"><g fill="none" stroke="#777" stroke-width="0.6">
 <path d="M700.6 81.8 l1.6 2.6 l-1.3 0.6 l2.6 2.4 M700 88.2 h4.6"/>
 <path d="M708.7 88.2 V84.6 L713 81.8 V88.2 Z" fill="#9a9a9a" stroke="#999"/>
 <rect x="717.1" y="83.0" width="4.2" height="4.9"/><path d="M716.6 82 v1.6 M716.2 84 h1.4"/>
 <rect x="724.5" y="83.0" width="4.2" height="4.9"/><path d="M724 82 v1.6 M723.6 84 h1.4"/>
 <path d="M732.8 82.6 a2.4 2.9 0 1 1 -0.9 1.6 M731.6 82.4 l0.4 1.8 l1.6 -0.6"/>
</g></svg>
<div class="a" style="left:179.70px;top:285.80px;width:564.60px;height:169.40px;background:#fff;"></div>
<div class="t" style="left:185.50px;top:294.95px;font-size:8px;color:#333;font-weight:normal;transform:scaleX(0.73);">历史记录</div>
<div class="a" style="left:696.60px;top:289.40px;width:21.60px;height:10.40px;background:#fcefcb;border:0.5px solid #f3d58f;border-radius:1px"></div>
<div class="t" style="left:701.50px;top:293.35px;font-size:5px;color:#e9a72a;font-weight:bold;">⇩ 导出</div>
<div class="a" style="left:721.20px;top:289.40px;width:19.80px;height:10.40px;background:#d3e7fb;border:0.5px solid #b8d9fa;border-radius:1px"></div>
<div class="t" style="left:725.00px;top:293.35px;font-size:5px;color:#3a8ee6;font-weight:bold;">⎙ 打印</div>
<div class="a" style="left:184.00px;top:303.00px;width:558.00px;height:0.70px;background:#e4e6eb;"></div>
<div class="t" style="left:185.80px;top:314.95px;font-size:5px;color:#7d7f85;font-weight:normal;">序号</div>
<div class="t" style="left:218.00px;top:314.95px;font-size:5px;color:#7d7f85;font-weight:normal;">设备名称</div>
<div class="t" style="left:294.90px;top:314.95px;font-size:5px;color:#7d7f85;font-weight:normal;">时间</div>
<div class="t" style="left:370.30px;top:314.95px;font-size:5px;color:#7d7f85;font-weight:normal;">所属区域</div>
<div class="t" style="left:446.00px;top:314.95px;font-size:5px;color:#7d7f85;font-weight:normal;">尖电费(元)</div>
<div class="t" style="left:521.80px;top:314.95px;font-size:5px;color:#7d7f85;font-weight:normal;">峰电费(元)</div>
<div class="t" style="left:597.00px;top:314.95px;font-size:5px;color:#7d7f85;font-weight:normal;">平电费(元)</div>
<div class="t" style="left:672.60px;top:314.95px;font-size:5px;color:#7d7f85;font-weight:normal;">谷电费(元)</div>
<div class="a" style="left:183.50px;top:325.50px;width:557.00px;height:0.60px;background:#ebeef5;"></div>
<div class="a" style="left:180px;top:328.3px;width:564px;height:107.2px;overflow:hidden"><div class="a" style="left:-180px;top:-328.3px;width:750px;height:500px">
<div class="t" style="left:185.80px;top:335.30px;font-size:5.5px;color:#3a3a3a;font-weight:normal;transform:scaleX(0.77);">1</div>
<div class="t" style="left:218.00px;top:334.88px;font-size:6px;color:#3a3a3a;font-weight:normal;transform:scaleX(0.71);">配电室1</div>
<div class="t" style="left:294.90px;top:335.30px;font-size:5.5px;color:#3a3a3a;font-weight:normal;transform:scaleX(0.77);">2022-10-25</div>
<div class="t" style="left:370.30px;top:334.88px;font-size:6px;color:#3a3a3a;font-weight:normal;transform:scaleX(0.71);">园区</div>
<div class="t" style="left:446.00px;top:335.30px;font-size:5.5px;color:#3a3a3a;font-weight:normal;transform:scaleX(0.77);">230.26</div>
<div class="t" style="left:521.80px;top:335.30px;font-size:5.5px;color:#3a3a3a;font-weight:normal;transform:scaleX(0.77);">0.00</div>
<div class="t" style="left:597.00px;top:335.30px;font-size:5.5px;color:#3a3a3a;font-weight:normal;transform:scaleX(0.77);">0.00</div>
<div class="t" style="left:672.60px;top:335.30px;font-size:5.5px;color:#3a3a3a;font-weight:normal;transform:scaleX(0.77);">0.00</div>
<div class="a" style="left:183.50px;top:345.00px;width:557.00px;height:16.70px;background:#f9f9fa;"></div>
<div class="t" style="left:185.80px;top:352.00px;font-size:5.5px;color:#3a3a3a;font-weight:normal;transform:scaleX(0.77);">2</div>
<div class="t" style="left:218.00px;top:351.58px;font-size:6px;color:#3a3a3a;font-weight:normal;transform:scaleX(0.71);">水泵</div>
<div class="t" style="left:294.90px;top:352.00px;font-size:5.5px;color:#3a3a3a;font-weight:normal;transform:scaleX(0.77);">2022-10-25</div>
<div class="t" style="left:370.30px;top:351.58px;font-size:6px;color:#3a3a3a;font-weight:normal;transform:scaleX(0.71);">水泵</div>
<div class="t" style="left:446.00px;top:352.00px;font-size:5.5px;color:#3a3a3a;font-weight:normal;transform:scaleX(0.77);">0.00</div>
<div class="t" style="left:521.80px;top:352.00px;font-size:5.5px;color:#3a3a3a;font-weight:normal;transform:scaleX(0.77);">0.36</div>
<div class="t" style="left:597.00px;top:352.00px;font-size:5.5px;color:#3a3a3a;font-weight:normal;transform:scaleX(0.77);">0.41</div>
<div class="t" style="left:672.60px;top:352.00px;font-size:5.5px;color:#3a3a3a;font-weight:normal;transform:scaleX(0.77);">1.16</div>
<div class="t" style="left:185.80px;top:368.70px;font-size:5.5px;color:#3a3a3a;font-weight:normal;transform:scaleX(0.77);">3</div>
<div class="t" style="left:218.00px;top:368.28px;font-size:6px;color:#3a3a3a;font-weight:normal;transform:scaleX(0.71);">办公室</div>
<div class="t" style="left:294.90px;top:368.70px;font-size:5.5px;color:#3a3a3a;font-weight:normal;transform:scaleX(0.77);">2022-10-25</div>
<div class="t" style="left:370.30px;top:368.28px;font-size:6px;color:#3a3a3a;font-weight:normal;transform:scaleX(0.71);">园区</div>
<div class="t" style="left:446.00px;top:368.70px;font-size:5.5px;color:#3a3a3a;font-weight:normal;transform:scaleX(0.77);">36.27</div>
<div class="t" style="left:521.80px;top:368.70px;font-size:5.5px;color:#3a3a3a;font-weight:normal;transform:scaleX(0.77);">0.00</div>
<div class="t" style="left:597.00px;top:368.70px;font-size:5.5px;color:#3a3a3a;font-weight:normal;transform:scaleX(0.77);">0.00</div>
<div class="t" style="left:672.60px;top:368.70px;font-size:5.5px;color:#3a3a3a;font-weight:normal;transform:scaleX(0.77);">0.00</div>
<div class="a" style="left:183.50px;top:378.40px;width:557.00px;height:16.70px;background:#f9f9fa;"></div>
<div class="t" style="left:185.80px;top:385.40px;font-size:5.5px;color:#3a3a3a;font-weight:normal;transform:scaleX(0.77);">4</div>
<div class="t" style="left:218.00px;top:384.98px;font-size:6px;color:#3a3a3a;font-weight:normal;transform:scaleX(0.71);">机器人车间</div>
<div class="t" style="left:294.90px;top:385.40px;font-size:5.5px;color:#3a3a3a;font-weight:normal;transform:scaleX(0.77);">2022-10-25</div>
<div class="t" style="left:370.30px;top:384.98px;font-size:6px;color:#3a3a3a;font-weight:normal;transform:scaleX(0.71);">机器人车间</div>
<div class="t" style="left:446.00px;top:385.40px;font-size:5.5px;color:#3a3a3a;font-weight:normal;transform:scaleX(0.77);">--</div>
<div class="t" style="left:521.80px;top:385.40px;font-size:5.5px;color:#3a3a3a;font-weight:normal;transform:scaleX(0.77);">0.99</div>
<div class="t" style="left:597.00px;top:385.40px;font-size:5.5px;color:#3a3a3a;font-weight:normal;transform:scaleX(0.77);">2.45</div>
<div class="t" style="left:672.60px;top:385.40px;font-size:5.5px;color:#3a3a3a;font-weight:normal;transform:scaleX(0.77);">0.21</div>
<div class="t" style="left:185.80px;top:402.10px;font-size:5.5px;color:#3a3a3a;font-weight:normal;transform:scaleX(0.77);">5</div>
<div class="t" style="left:218.00px;top:401.68px;font-size:6px;color:#3a3a3a;font-weight:normal;transform:scaleX(0.71);">安装车间空电1</div>
<div class="t" style="left:294.90px;top:402.10px;font-size:5.5px;color:#3a3a3a;font-weight:normal;transform:scaleX(0.77);">2022-10-25</div>
<div class="t" style="left:370.30px;top:401.68px;font-size:6px;color:#3a3a3a;font-weight:normal;transform:scaleX(0.71);">安装车间</div>
<div class="t" style="left:446.00px;top:402.10px;font-size:5.5px;color:#3a3a3a;font-weight:normal;transform:scaleX(0.77);">--</div>
<div class="t" style="left:521.80px;top:402.10px;font-size:5.5px;color:#3a3a3a;font-weight:normal;transform:scaleX(0.77);">4.75</div>
<div class="t" style="left:597.00px;top:402.10px;font-size:5.5px;color:#3a3a3a;font-weight:normal;transform:scaleX(0.77);">5.60</div>
<div class="t" style="left:672.60px;top:402.10px;font-size:5.5px;color:#3a3a3a;font-weight:normal;transform:scaleX(0.77);">0.66</div>
<div class="a" style="left:183.50px;top:411.80px;width:557.00px;height:16.70px;background:#f9f9fa;"></div>
<div class="t" style="left:185.80px;top:418.80px;font-size:5.5px;color:#3a3a3a;font-weight:normal;transform:scaleX(0.77);">6</div>
<div class="t" style="left:218.00px;top:418.38px;font-size:6px;color:#3a3a3a;font-weight:normal;transform:scaleX(0.71);">安装车间空电2</div>
<div class="t" style="left:294.90px;top:418.80px;font-size:5.5px;color:#3a3a3a;font-weight:normal;transform:scaleX(0.77);">2022-10-25</div>
<div class="t" style="left:370.30px;top:418.38px;font-size:6px;color:#3a3a3a;font-weight:normal;transform:scaleX(0.71);">安装车间</div>
<div class="t" style="left:446.00px;top:418.80px;font-size:5.5px;color:#3a3a3a;font-weight:normal;transform:scaleX(0.77);">--</div>
<div class="t" style="left:521.80px;top:418.80px;font-size:5.5px;color:#3a3a3a;font-weight:normal;transform:scaleX(0.77);">14.24</div>
<div class="t" style="left:597.00px;top:418.80px;font-size:5.5px;color:#3a3a3a;font-weight:normal;transform:scaleX(0.77);">34.67</div>
<div class="t" style="left:672.60px;top:418.80px;font-size:5.5px;color:#3a3a3a;font-weight:normal;transform:scaleX(0.77);">64.08</div>
<div class="t" style="left:185.80px;top:435.50px;font-size:5.5px;color:#3a3a3a;font-weight:normal;transform:scaleX(0.77);">7</div>
<div class="t" style="left:218.00px;top:435.08px;font-size:6px;color:#3a3a3a;font-weight:normal;transform:scaleX(0.71);">配电室1</div>
<div class="t" style="left:294.90px;top:435.50px;font-size:5.5px;color:#3a3a3a;font-weight:normal;transform:scaleX(0.77);">2022-10-24</div>
<div class="t" style="left:370.30px;top:435.08px;font-size:6px;color:#3a3a3a;font-weight:normal;transform:scaleX(0.71);">园区</div>
<div class="t" style="left:446.00px;top:435.50px;font-size:5.5px;color:#3a3a3a;font-weight:normal;transform:scaleX(0.77);">1327.35</div>
<div class="t" style="left:521.80px;top:435.50px;font-size:5.5px;color:#3a3a3a;font-weight:normal;transform:scaleX(0.77);">0.00</div>
<div class="t" style="left:597.00px;top:435.50px;font-size:5.5px;color:#3a3a3a;font-weight:normal;transform:scaleX(0.77);">0.00</div>
<div class="t" style="left:672.60px;top:435.50px;font-size:5.5px;color:#3a3a3a;font-weight:normal;transform:scaleX(0.77);">0.00</div>
</div></div>
<div class="a" style="left:739.90px;top:328.60px;width:1.20px;height:50.00px;background:#d2d3d6;border-radius:1px"></div>
<div class="t" style="left:536.70px;top:463.35px;font-size:5px;color:#606266;font-weight:normal;">共 108 条</div>
<div class="a" style="left:557.70px;top:460.00px;width:29.00px;height:10.00px;background:#fff;border:0.5px solid #dcdfe6;border-radius:1px"></div>
<div class="t" style="left:562.00px;top:463.68px;font-size:5px;color:#606266;font-weight:normal;">10条/页</div>
<svg class="a" style="left:580px;top:463px" width="5" height="4" viewBox="0 0 5 4"><path d="M1 1.3 l1.5 1.4 l1.5 -1.4" fill="none" stroke="#c0c4cc" stroke-width="0.5"/></svg>
<div class="a" style="left:593.30px;top:460.00px;width:8.40px;height:10.00px;background:#f4f4f5;border-radius:1px"></div>
<div class="t" style="left:596.43px;top:463.75px;font-size:5.0px;color:#606266;font-weight:normal;">‹</div>
<div class="a" style="left:604.30px;top:460.00px;width:9.00px;height:10.00px;background:#10a09a;border-radius:1px"></div>
<div class="t" style="left:607.73px;top:463.75px;font-size:5.0px;color:#fff;font-weight:normal;">1</div>
<div class="a" style="left:616.70px;top:460.00px;width:8.30px;height:10.00px;background:#f4f4f5;border-radius:1px"></div>
<div class="t" style="left:619.78px;top:463.75px;font-size:5.0px;color:#606266;font-weight:normal;">2</div>
<div class="a" style="left:628.30px;top:460.00px;width:8.40px;height:10.00px;background:#f4f4f5;border-radius:1px"></div>
<div class="t" style="left:631.43px;top:463.75px;font-size:5.0px;color:#606266;font-weight:normal;">3</div>
<div class="a" style="left:640.00px;top:460.00px;width:8.30px;height:10.00px;background:#f4f4f5;border-radius:1px"></div>
<div class="t" style="left:643.08px;top:463.75px;font-size:5.0px;color:#606266;font-weight:normal;">4</div>
<div class="a" style="left:651.70px;top:460.00px;width:8.30px;height:10.00px;background:#f4f4f5;border-radius:1px"></div>
<div class="t" style="left:654.78px;top:463.75px;font-size:5.0px;color:#606266;font-weight:normal;">5</div>
<div class="a" style="left:663.30px;top:460.00px;width:8.40px;height:10.00px;background:#f4f4f5;border-radius:1px"></div>
<div class="t" style="left:666.43px;top:463.75px;font-size:5.0px;color:#606266;font-weight:normal;">6</div>
<div class="a" style="left:675.00px;top:460.00px;width:8.30px;height:10.00px;background:#f4f4f5;border-radius:1px"></div>
<div class="t" style="left:675.94px;top:463.75px;font-size:5.0px;color:#606266;font-weight:normal;">···</div>
<div class="a" style="left:686.70px;top:460.00px;width:8.30px;height:10.00px;background:#f4f4f5;border-radius:1px"></div>
<div class="t" style="left:688.71px;top:463.75px;font-size:5.0px;color:#606266;font-weight:normal;">11</div>
<div class="a" style="left:698.30px;top:460.00px;width:8.40px;height:10.00px;background:#f4f4f5;border-radius:1px"></div>
<div class="t" style="left:701.43px;top:463.75px;font-size:5.0px;color:#606266;font-weight:normal;">›</div>
<div class="t" style="left:716.50px;top:463.75px;font-size:5px;color:#606266;font-weight:normal;">前往</div>
<div class="a" style="left:725.00px;top:460.00px;width:12.30px;height:10.00px;background:#fff;border:0.5px solid #dcdfe6;border-radius:1px"></div>
<div class="t" style="left:730.03px;top:463.75px;font-size:5.0px;color:#606266;font-weight:normal;">1</div>
<div class="t" style="left:740.50px;top:463.75px;font-size:5px;color:#606266;font-weight:normal;">页</div>
<div class="a" style="left:0.00px;top:492.40px;width:75.50px;height:6.20px;background:#e3e4e8;border-top:0.4px solid #cfd1d6;border-right:0.4px solid #cfd1d6"></div>
<div class="t" style="left:0.00px;top:494.75px;font-size:5.0px;color:#2a2a2a;font-weight:normal;transform:scaleX(0.72);">aaa.com/#/energy/tele/tele/electricCurrent</div>
<div class="a" style="left:747.90px;top:22.60px;width:0.80px;height:476.00px;background:#f6f7fc;"></div>
<div class="a" style="left:748.70px;top:0.00px;width:1.30px;height:500.00px;background:#2c3138;"></div>
<div class="a" style="left:76.40px;top:497.70px;width:672.30px;height:0.90px;background:#fbfcff;"></div>
<div class="a" style="left:0.00px;top:498.60px;width:750.00px;height:1.40px;background:#2a2f33;"></div>
<div class="a" style="left:726.60px;top:233.00px;width:23.40px;height:33.30px;background:#8a8a8a;"></div>
<div class="a" style="left:745.00px;top:233.00px;width:5.00px;height:33.30px;background:#7a7a7a;"></div>
<svg class="a" style="left:726.6px;top:233px" width="23" height="34" viewBox="0 0 23 34"><path d="M9.6 11 l4 6 l-4 6" fill="none" stroke="#fff" stroke-width="1.2"/></svg>
</body></html>
